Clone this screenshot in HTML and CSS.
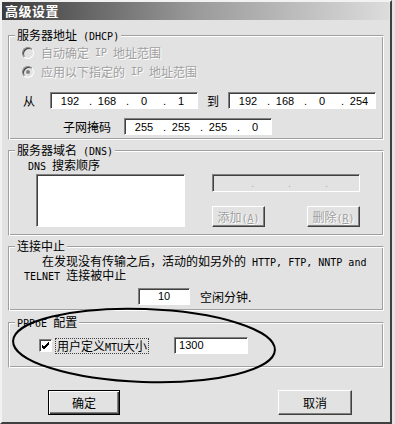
FILE: index.html
```html
<!DOCTYPE html>
<html lang="zh-CN">
<head>
    <meta charset="UTF-8">
    <meta name="viewport" content="width=device-width, initial-scale=1.0">
    <title>高级设置</title>
    <link rel="stylesheet" href="styles.css">
</head>
<body>
    <div class="dialog">
        <div class="titlebar">高级设置</div>

        <!-- DHCP -->
        <fieldset class="group g-dhcp">
            <legend>服务器地址<span class="en"> (DHCP)</span></legend>
            <div class="radio-row disabled"><span class="radio"></span>自动确定<span class="en"> IP </span>地址范围</div>
            <div class="radio-row disabled second"><span class="radio checked"></span>应用以下指定的<span class="en"> IP </span>地址范围</div>
            <div class="ip-row">
                <span class="lbl-from">从</span>
                <div class="ipbox"><span>192</span><i>.</i><span>168</span><i>.</i><span>0</span><i>.</i><span>1</span></div>
                <span class="lbl-to">到</span>
                <div class="ipbox"><span>192</span><i>.</i><span>168</span><i>.</i><span>0</span><i>.</i><span>254</span></div>
            </div>
            <div class="mask-row">
                <span class="lbl-mask">子网掩码</span>
                <div class="ipbox"><span>255</span><i>.</i><span>255</span><i>.</i><span>255</span><i>.</i><span>0</span></div>
            </div>
        </fieldset>

        <!-- DNS -->
        <fieldset class="group g-dns">
            <legend>服务器域名<span class="en"> (DNS)</span></legend>
            <div class="dns-label"><span class="en">DNS </span>搜索顺序</div>
            <div class="dns-row">
                <div class="listbox"></div>
                <div class="dns-side">
                    <div class="ipbox off"><span></span><i>.</i><span></span><i>.</i><span></span><i>.</i><span></span></div>
                    <div class="dns-buttons">
                        <button class="btn small" disabled>添加<span class="en">(<u>A</u>)</span></button>
                        <button class="btn small" disabled>删除<span class="en">(<u>R</u>)</span></button>
                    </div>
                </div>
            </div>
        </fieldset>

        <!-- idle -->
        <fieldset class="group g-idle">
            <legend>连接中止</legend>
            <p class="idle-line first">在发现没有传输之后，活动的如另外的<span class="en"> HTTP, FTP, NNTP and</span></p>
            <p class="idle-line"><span class="en">TELNET </span>连接被中止</p>
            <div class="idle-row">
                <div class="field num">10</div>
                <span>空闲分钟.</span>
            </div>
        </fieldset>

        <!-- pppoe -->
        <fieldset class="group g-ppp">
            <legend><span class="en">PPPoE </span>配置</legend>
            <div class="mtu-row">
                <span class="checkbox">
                    <svg width="9" height="9" viewBox="0 0 9 9"><path d="M1 4 L3 6 L8 1 M1 5 L3 7 L8 2 M1 6 L3 8 L8 3" stroke="#000" stroke-width="1" fill="none"/></svg>
                </span>
                <span class="focus-label">用户定义<span class="en">MTU</span>大小</span>
                <div class="field mtu">1300</div>
            </div>
        </fieldset>

        <div class="buttons">
            <button class="btn default">确定</button>
            <button class="btn">取消</button>
        </div>

        <!-- hand drawn circle on top -->
        <svg class="mark" width="395" height="424" viewBox="0 0 395 424">
            <ellipse cx="144" cy="345.5" rx="131" ry="36.5" transform="rotate(2 144 345.5)" fill="none" stroke="#000" stroke-width="2"/>
        </svg>
    </div>
</body>
</html>
```

FILE: styles.css
```css
*{
    padding: 0;
    margin: 0;
    box-sizing: border-box;
}
body{
    background-color: #e2e2e2;
    font-family: "Noto Sans CJK SC", sans-serif;
    font-size: 12px;
    line-height: 14px;
    color: #000;
}
.en{
    font-family: "DejaVu Sans Mono", monospace;
    font-size: 10px;
    line-height: 10px;
    white-space: pre;
}
.dialog{
    position: relative;
    width: 392px;
    height: 424px;
    background-color: #e2e2e2;
    border: 2px solid;
    border-color: #f2f2f2 #404040 #404040 #f2f2f2;
    display: flex;
    flex-direction: column;
}
.titlebar{
    height: 18px;
    flex-shrink: 0;
    margin-right: 1px;
    padding-left: 3px;
    background: linear-gradient(to right, #3c3c3c, #9a9a9a 50%, #dcdcdc);
    color: #fff;
    font-weight: bold;
    font-size: 13px;
    line-height: 18px;
    letter-spacing: 0.5px;
}

/* group boxes */
.group{
    flex-shrink: 0;
    margin: 0 6px;
    padding: 0 0 0 6px;
    border: 1px solid;
    border-color: #a0a0a0 #fff #fff #a0a0a0;
    box-shadow: inset 1px 1px 0 #fff, inset -1px -1px 0 #a0a0a0;
    min-width: 0;
}
.group legend{
    height: 14px;
    padding: 0 2px;
    line-height: 14px;
    background-color: #e2e2e2;
}
.g-dhcp{
    margin-top: 8px;
    padding-top: 4px;
    padding-bottom: 4px;
}
.g-dns{
    margin-top: 3px;
    padding-top: 1px;
    padding-bottom: 8px;
}
.g-idle{
    margin-top: 3px;
    padding-top: 1px;
    padding-bottom: 5px;
}
.g-ppp{
    margin-top: 4px;
    padding-top: 8px;
    padding-bottom: 13px;
}

/* radios */
.radio-row{
    display: flex;
    align-items: center;
    height: 14px;
    margin-left: 7px;
}
.radio-row.second{
    margin-top: 5px;
}
.disabled{
    color: #a0a0a0;
    text-shadow: 1px 1px 0 #fff;
}
.radio{
    position: relative;
    width: 12px;
    height: 12px;
    margin-right: 7px;
    border-radius: 50%;
    border: 1px solid;
    border-color: #808080 #fff #fff #808080;
    box-shadow: inset 1px 1px 0 #404040;
    background-color: #e2e2e2;
}
.radio.checked::after{
    content: '';
    position: absolute;
    left: 3px;
    top: 3px;
    width: 4px;
    height: 4px;
    border-radius: 50%;
    background-color: #808080;
}

/* ip fields */
.ipbox, .field{
    background-color: #fff;
    border: 1px solid;
    border-color: #808080 #fff #fff #808080;
    box-shadow: inset 1px 1px 0 #404040;
}
.ipbox{
    display: flex;
    align-items: center;
    width: 148px;
    height: 17px;
    padding-left: 4px;
    font-family: "Liberation Sans", Arial, sans-serif;
    font-size: 11px;
}
.ipbox span{
    width: 30px;
    text-align: center;
}
.ipbox i{
    font-style: normal;
    width: 7px;
    text-align: right;
}
.ipbox.off{
    height: 18px;
    background-color: #e2e2e2;
    color: #b0b0b0;
}
.ip-row{
    display: flex;
    align-items: center;
    height: 17px;
    margin-top: 13px;
    margin-left: 7px;
}
.lbl-from{
    width: 28px;
    padding-left: 1px;
}
.lbl-to{
    width: 21px;
    margin-left: 9px;
}
.mask-row{
    display: flex;
    align-items: center;
    height: 17px;
    margin-top: 9px;
    margin-left: 48px;
}
.lbl-mask{
    margin-right: 13px;
}

/* dns */
.dns-label{
    height: 14px;
    margin-left: 13px;
}
.dns-row{
    display: flex;
    margin-top: 2px;
}
.listbox{
    width: 149px;
    height: 53px;
    margin-left: 21px;
    background-color: #fff;
    border: 1px solid;
    border-color: #808080 #fff #fff #808080;
    box-shadow: inset 1px 1px 0 #404040;
}
.dns-side{
    margin-left: 27px;
}
.dns-buttons{
    display: flex;
    justify-content: space-between;
    margin-top: 14px;
}

/* buttons */
.btn{
    font: inherit;
    height: 25px;
    width: 74px;
    background-color: #e2e2e2;
    border: 1px solid;
    border-color: #fff #404040 #404040 #fff;
    box-shadow: inset -1px -1px 0 #808080;
    color: #000;
}
.btn.small{
    width: 53px;
    height: 21px;
}
.btn:disabled{
    color: #a0a0a0;
    text-shadow: 1px 1px 0 #fff;
}
.btn.default{
    width: 72px;
    border-color: #000;
    box-shadow: inset 1px 1px 0 #fff, inset -1px -1px 0 #404040, inset -2px -2px 0 #808080;
}
.buttons{
    display: flex;
    justify-content: space-between;
    margin-top: 22px;
    padding: 0 38px 0 46px;
}

/* idle */
.idle-line{
    height: 14px;
    line-height: 14px;
    margin-left: 9px;
    white-space: nowrap;
}
.idle-line.first{
    padding-left: 18px;
}
.idle-row{
    display: flex;
    align-items: center;
    height: 17px;
    margin-top: 6px;
    margin-left: 123px;
}
.field{
    height: 17px;
    font-family: "Liberation Sans", Arial, sans-serif;
    font-size: 11px;
    line-height: 15px;
}
.field.num{
    width: 52px;
    margin-right: 10px;
    text-align: center;
}

/* pppoe */
.mtu-row{
    display: flex;
    align-items: center;
    height: 17px;
    margin-left: 24px;
}
.checkbox{
    display: flex;
    align-items: center;
    justify-content: center;
    width: 13px;
    height: 13px;
    background-color: #fff;
    border: 1px solid;
    border-color: #808080 #fff #fff #808080;
    box-shadow: inset 1px 1px 0 #404040;
}
.focus-label{
    height: 16px;
    margin-left: 3px;
    padding: 0 1px;
    border: 1px dotted #404040;
    line-height: 14px;
}
.field.mtu{
    width: 74px;
    margin-left: 25px;
    padding-left: 4px;
}

.mark{
    position: absolute;
    left: -2px;
    top: -2px;
    pointer-events: none;
}
```
